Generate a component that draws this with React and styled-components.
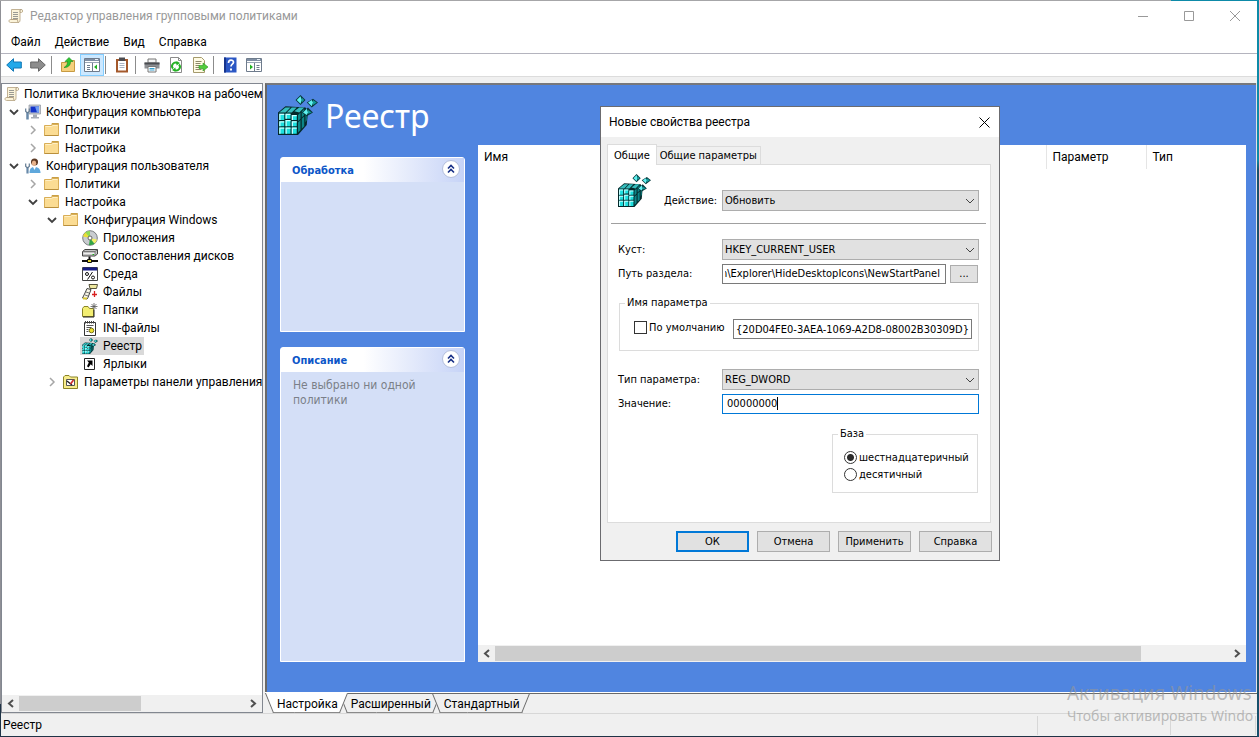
import React, { useEffect, useRef } from "react";
import styled, { createGlobalStyle, css } from "styled-components";

const ui = 'Roboto, "Noto Sans", sans-serif';
const display = '"Noto Sans", "Open Sans", sans-serif';
const dialogFont = '"DejaVu Sans Condensed", "DejaVu Sans", sans-serif';

const Global = createGlobalStyle`
  * { box-sizing: border-box; }
  body { margin: 0; font: 12px/18px ${ui}; color: #000; }
  button, input, select { font: inherit; color: inherit; margin: 0; }
  button { cursor: default; }
  svg { display: block; flex: none; }
`;

/* ---------- window frame ---------- */

const Desktop = styled.div`
  min-height: 100vh;
  display: flex;
  padding: 1px 2px 1px 1px;
  background: linear-gradient(90deg, #a6a6a8 93%, #0d8aa8 93%) top / 100% 1px no-repeat,
    linear-gradient(#0d8aa8 0 160px, #17506c 170px) right / 2px 100% no-repeat,
    linear-gradient(#8f9096 0 704px, #1f3346 704px) left / 1px 100% no-repeat,
    #1f3346;
`;

const Window = styled.div`
  position: relative;
  flex: 1;
  min-width: 0;
  display: flex;
  flex-direction: column;
  background: #f0f0f0;
  overflow: hidden;
`;

const TitleBar = styled.header`
  display: flex;
  align-items: center;
  height: 30px;
  padding-left: 7px;
  background: #fff;
  color: #999;
`;

const TitleText = styled.h1`
  flex: 1;
  margin: 0 0 0 6px;
  font: inherit;
`;

const CaptionButton = styled.button`
  width: 46px;
  height: 30px;
  padding: 0 0 0 2px;
  display: grid;
  place-items: center;
  border: 0;
  background: none;
`;

const MenuBar = styled.nav`
  display: flex;
  height: 23px;
  padding-left: 3px;
  background: #fff;
  border-bottom: 1px solid #b4b4be;
`;

const MenuButton = styled.button`
  padding: 0 7px;
  border: 0;
  background: none;
`;

const Toolbar = styled.div`
  display: flex;
  align-items: center;
  height: 23px;
  padding-left: 1px;
  background: #fff;
  border-bottom: 1px solid #dcdcdc;
`;

const ToolButton = styled.button`
  width: 24px;
  height: 22px;
  padding: 0;
  display: grid;
  place-items: center;
  border: 1px solid ${(p) => (p.$on ? "#84ceff" : "transparent")};
  background: ${(p) => (p.$on ? "#cce8ff" : "none")};
`;

const ToolSeparator = styled.span`
  width: 1px;
  height: 18px;
  margin: 0 4px 0 1px;
  background: #8c8c8c;
`;

const Body = styled.div`
  flex: 1;
  display: flex;
  gap: 2px;
  padding-top: 6px;
`;

const StatusBar = styled.footer`
  display: flex;
  height: 23px;
  padding-right: 1px;
  border-top: 1px solid #d7d7d7;
`;

const StatusCell = styled.div`
  flex: ${(p) => (p.$width ? `0 0 ${p.$width}px` : 1)};
  margin: 2px 0 1px;
  padding: 0 2px;
  border-right: 1px solid #d7d7d7;
`;

/* ---------- scroll bar ---------- */

const ScrollTrack = styled.div`
  display: flex;
  height: 17px;
  background: #f0f0f0;
`;

const ScrollButton = styled.button`
  width: 17px;
  padding: 0;
  display: grid;
  place-items: center;
  border: 0;
  background: none;
`;

const ScrollLane = styled.div`
  flex: 1;
  padding: 1px 0;
`;

const ScrollThumb = styled.div`
  width: ${(p) => p.$size};
  height: 100%;
  background: #cdcdcd;
`;

function HScroll({ size }) {
  return (
    <ScrollTrack>
      <ScrollButton aria-label="Прокрутить влево">
        <svg width="7" height="9" viewBox="0 0 7 9" fill="none" stroke="#505050" strokeWidth="2"><path d="M6 1 2 4.500 6 8" /></svg>
      </ScrollButton>
      <ScrollLane><ScrollThumb $size={size} /></ScrollLane>
      <ScrollButton aria-label="Прокрутить вправо">
        <svg width="7" height="9" viewBox="0 0 7 9" fill="none" stroke="#505050" strokeWidth="2"><path d="M1 1 5 4.500 1 8" /></svg>
      </ScrollButton>
    </ScrollTrack>
  );
}

/* ---------- tree ---------- */

const TreePane = styled.aside`
  flex: 0 0 262px;
  display: flex;
  flex-direction: column;
  border: 1px solid #828790;
  background: #fff;
  overflow: hidden;
`;

const TreeList = styled.ul`
  flex: 1;
  margin: 0;
  padding: 1px 0 0;
  list-style: none;
`;

const TreeRow = styled.li`
  display: flex;
  height: 18px;
  padding-left: ${(p) => (p.$level ? 3 + 19 * (p.$level - 1) : 2)}px;
`;

const Expander = styled.span`
  flex: 0 0 18px;
  display: grid;
  place-items: center;
`;

const TreeLabel = styled.button`
  display: flex;
  align-items: center;
  gap: ${(p) => (p.$root ? 4 : 5)}px;
  height: 18px;
  padding: 0 2px;
  border: 0;
  white-space: nowrap;
  background: ${(p) => (p.$selected ? "#d9d9d9" : "none")};
  ${(p) => p.$root && css`padding: 0;`}
`;

/* ---------- result pane ---------- */

const Main = styled.main`
  position: relative;
  flex: 1;
  min-width: 0;
  display: flex;
  flex-direction: column;
`;

const Pane = styled.section`
  flex: 1;
  display: flex;
  flex-direction: column;
  margin-right: 1px;
  padding: 0 10px 30px 11px;
  border: solid #696969;
  border-width: 2px 0 0 2px;
  border-top-color: #77787c;
  background: #5085e0;
  box-shadow: 0 1px #fff, 1px 0 #e3e3e3;
`;

const PaneHeader = styled.div`
  display: flex;
  gap: 7px;
  height: 60px;
  padding-top: 10px;
`;

const PaneTitle = styled.h2`
  margin: 0;
  font: 32px/42px ${display};
  color: #fff;
`;

const PaneBody = styled.div`
  flex: 1;
  display: flex;
  gap: 13px;
`;

const Cards = styled.div`
  flex: 0 0 187px;
  display: flex;
  flex-direction: column;
  gap: 15px;
  padding: 12px 0 0 2px;
`;

const Card = styled.section`
  flex: ${(p) => (p.$height ? `0 0 ${p.$height}px` : 1)};
  border: 1px solid #fff;
  border-radius: 3px 3px 0 0;
  background: #d4dff7;
`;

const CardHeader = styled.div`
  display: flex;
  align-items: center;
  justify-content: space-between;
  height: 24px;
  padding: 0 4px 2px 11px;
  background: linear-gradient(90deg, #fff 45%, #c6d3f7);
`;

const CardTitle = styled.h3`
  margin: 0;
  padding-top: 4px;
  font: bold 11px/18px "DejaVu Sans Condensed", sans-serif;
  color: #0c56c8;
`;

const RoundButton = styled.button`
  width: 18px;
  height: 18px;
  padding: 0;
  display: grid;
  place-items: center;
  border: 1px solid #b4bfdc;
  border-radius: 50%;
  background: #fff;
`;

const CardText = styled.p`
  margin: 0;
  padding: 6px 12px;
  font: 12px/15px ${dialogFont};
  color: #7b7f88;
`;

const ListView = styled.div`
  flex: 1;
  min-width: 0;
  display: flex;
  flex-direction: column;
  justify-content: space-between;
  background: #fff;
`;

const ListTable = styled.table`
  width: 100%;
  table-layout: fixed;
  border-collapse: collapse;
  th {
    height: 24px;
    padding: 0 6px;
    font-weight: normal;
    text-align: left;
    border-left: 1px solid #e5e5e5;
  }
  th:first-child { border-left: 0; }
  th + th { width: 100px; }
`;

const ViewTabs = styled.div`
  display: flex;
  height: 20px;
  margin-top: 1px;
  border-top: 1px solid #696969;
`;

const ViewTab = styled.button`
  position: relative;
  z-index: ${(p) => (p.$active ? 1 : 0)};
  height: 19px;
  margin: 0 -9px 0 0;
  padding: 0 10px 0 12px;
  border: 0;
  background: none;
  span { position: relative; z-index: 1; }
  &::before, &::after {
    content: "";
    position: absolute;
    top: ${(p) => (p.$active ? "-1px" : "0")};
    bottom: 0;
    background: ${(p) => (p.$active ? "#fff" : "#f0f0f0")};
    border-bottom: 1px solid #8a8a8a;
  }
  &::before {
    left: 4px;
    right: 50%;
    border-left: 1px solid #696969;
    transform: skewX(22deg);
  }
  &::after {
    left: 40%;
    right: 4px;
    border-right: 1px solid #696969;
    transform: skewX(-22deg);
  }
`;

const Watermark = styled.div`
  position: absolute;
  right: 0;
  bottom: 9px;
  width: 190px;
  white-space: nowrap;
  pointer-events: none;
  color: rgba(150, 150, 150, 0.62);
  font-family: ${display};
`;

const WatermarkTitle = styled.div`
  font-size: 19px;
  line-height: 24px;
`;

const WatermarkText = styled.div`
  font-size: 14px;
  line-height: 22px;
`;

/* ---------- dialog ---------- */

const Dialog = styled.div`
  position: absolute;
  z-index: 2;
  left: 335px;
  top: 23px;
  width: 400px;
  border: 1px solid #6b6b6f;
  background: #f0f0f0;
  font: 11px/18px ${dialogFont};
`;

const DialogTitle = styled.div`
  display: flex;
  align-items: center;
  justify-content: space-between;
  height: 30px;
  padding: 0 8px;
  background: #fff;
  font: 12px/18px ${ui};
`;

const CloseButton = styled.button`
  width: 14px;
  height: 14px;
  padding: 0;
  display: grid;
  place-items: center;
  border: 0;
  background: none;
`;

const TabList = styled.div`
  display: flex;
  align-items: flex-end;
  height: 27px;
  padding: 0 6px;
`;

const DialogTab = styled.button`
  height: ${(p) => (p.$active ? 21 : 18)}px;
  padding: 0 ${(p) => (p.$active ? 6 : 3)}px;
  line-height: 17px;
  border: 1px solid #dcdcdc;
  border-bottom: 0;
  border-left-width: ${(p) => (p.$active ? 1 : 0)}px;
  background: ${(p) => (p.$active ? "#fff" : "#f0f0f0")};
  ${(p) => p.$active && css`position: relative; margin-bottom: -1px;`}
`;

const TabPanel = styled.div`
  height: 359px;
  margin: 0 8px 0 6px;
  padding: 9px 11px 0 10px;
  border: 1px solid #dcdcdc;
  background: #fff;
`;

const FormRow = styled.div`
  display: flex;
  align-items: ${(p) => p.$align || "center"};
  height: ${(p) => p.$height || 21}px;
  margin-top: ${(p) => p.$top || 0}px;
`;

const IconCell = styled.span`
  flex: 0 0 46px;
  align-self: flex-start;
`;

const FieldLabel = styled.label`
  flex: 0 0 ${(p) => p.$width || 104}px;
  line-height: 20px;
`;

const SelectBox = styled.span`
  position: relative;
  flex: 1;
  svg { position: absolute; right: 4px; top: 8px; pointer-events: none; }
`;

const Select = styled.select`
  display: block;
  width: 100%;
  height: 21px;
  padding: 0 2px;
  appearance: none;
  border: 1px solid #adadad;
  border-radius: 0;
  background: #e1e1e1;
`;

const TextInput = styled.input`
  flex: 1;
  min-width: 0;
  height: 20px;
  padding: 0 5px 0 2px;
  border: 1px solid #7a7a7a;
  background: #fff;
`;

const NameInput = styled(TextInput)`
  flex: 0 0 239px;
  margin-left: auto;
  padding-right: 2px;
`;

const FocusedField = styled.div`
  flex: 1;
  display: flex;
  align-items: center;
  height: 20px;
  padding-left: 4px;
  border: 1px solid #0078d7;
  input {
    field-sizing: content;
    padding: 0;
    border: 0;
    outline: 0;
    background: none;
  }
`;

const Caret = styled.span`
  width: 1px;
  height: 13px;
  background: #000;
`;

const Divider = styled.hr`
  height: 1px;
  margin: 12px -7px 15px;
  border: 0;
  background: #a0a0a0;
`;

const Group = styled.fieldset`
  min-width: 0;
  margin: ${(p) => (p.$right ? "11px 1px 0 214px" : "10px 0 0 1px")};
  height: ${(p) => (p.$right ? 68 : 57)}px;
  padding: ${(p) => (p.$right ? "6px 11px" : "7px 6px 0 14px")};
  border: 1px solid #dcdcdc;
  legend {
    margin-left: ${(p) => (p.$right ? -6 : -9)}px;
    padding: 0 2px;
  }
`;

const Check = styled.input`
  appearance: none;
  flex: none;
  width: 13px;
  height: 13px;
  border: 1px solid #333;
  background: #fff;
`;

const Radio = styled(Check)`
  border-radius: 50%;
  &:checked { background: radial-gradient(#2b2b2b 0 3px, #fff 4px); }
`;

const OptionLabel = styled.label`
  display: flex;
  align-items: center;
  gap: 2px;
  height: 17px;
  white-space: nowrap;
`;

const Buttons = styled.div`
  display: flex;
  justify-content: flex-end;
  gap: 8px;
  padding: 8px 7px;
`;

const PushButton = styled.button`
  width: 73px;
  height: 21px;
  padding: 0;
  line-height: 17px;
  border: ${(p) => (p.$primary ? "2px solid #0078d7" : "1px solid #adadad")};
  background: #e1e1e1;
`;

const BrowseButton = styled(PushButton)`
  width: 28px;
  height: 18px;
  margin: 0 1px 0 4px;
  line-height: 12px;
`;

/* ---------- icons ---------- */

const Ico = ({ children, size = 16 }) => (
  <svg width={size} height={size} viewBox="0 0 16 16" fill="none" aria-hidden="true">{children}</svg>
);

const ScrollIcon = () => (
  <Ico>
    <path d="M3.500 1.500h10c1.500 0 1.500 3 0 3h-1.500V12c0 2-1 2.500-2 2.500H2.500c-2 0-2-3 0-3h1Z" fill="#fbf3d9" stroke="#c2b294" />
    <path d="M12 4.500V3c0-1 .6-1.500 1.500-1.500" stroke="#a4947a" />
    <path d="M5 4.500h5M5 6.500h5M5 8.500h5M5 10.500h5" stroke="#9a9a94" />
    <path d="M2.500 11.500h7c0 2 .5 3 1.500 3" stroke="#b5a384" />
  </Ico>
);

const ArrowIcon = ({ fill, stroke, flip }) => (
  <Ico>
    <path transform={flip ? "matrix(-1 0 0 1 16 0)" : undefined} d="M.7 8 7.500 1.700V5H15.300v6H7.500v3.300Z" fill={fill} stroke={stroke} />
  </Ico>
);

const FolderIcon = () => (
  <Ico>
    <path d="M8 1.500h6.500v4H8Z" fill="#f3cf7a" stroke="#c99f45" />
    <path d="M10 2.500h3.500" stroke="#4c9bd8" />
    <path d="M.5 3.500h7l1.500-1h5.500v11H.5Z" fill="#fbdc93" stroke="#d9ae57" />
    <path d="M1.500 4.500h6l1.500-1h4.500" stroke="#fff0c4" />
    <path d="M.5 13.500h14" stroke="#b98f3c" />
  </Ico>
);

const FolderUpIcon = () => (
  <Ico>
    <path d="M1.500 5.500h5l1.500-2h6.500v11h-13Z" fill="#f5cf7c" stroke="#c79a42" />
    <path d="M4 10.500C7 9 7.500 6.500 7.500 4.500H5L9 .5l4 4h-2.500c0 4-2.500 6-6.500 6Z" fill="#2fc52f" stroke="#138a1b" strokeWidth=".6" />
  </Ico>
);

const PanelIcon = ({ right }) => (
  <Ico>
    <path d="M.5 1.500h15v13H.5Z" fill="#fff" stroke="#6e7b8c" />
    <path d="M1 3h14" stroke="#7f8ea3" strokeWidth="2" />
    <path d="M11 2.500h3" stroke="#e8eef5" />
    <path d="M1 5.500h14" stroke="#9aa6b5" />
    <path d="M8.500 6v8" stroke="#6e7b8c" />
    <path d={right ? "M10.500 8.500h3M10.500 10.500h3M10.500 12.500h3" : "M3 8.500h3M3 10.500h3M3 12.500h3"} stroke="#6e7b8c" />
    <path d={right ? "M4 7.500v5l3-2.500Z" : "M13 7.500v5l-3-2.500Z"} fill="#21b321" />
  </Ico>
);

const ClipboardIcon = () => (
  <Ico>
    <path d="M2 2h12v13.500H2Z" fill="#a4592c" />
    <path d="M4 4h8v9.500H4Z" fill="#fff" />
    <path d="M5 .5h6V4H5Z" fill="#4b4b50" />
    <path d="M5.500 6.500h5M5.500 8.500h5M5.500 10.500h5" stroke="#aab4c4" />
  </Ico>
);

const PrinterIcon = () => (
  <Ico>
    <path d="M4 2h8v4H4Z" fill="#f4f4f4" stroke="#777" />
    <path d="M.5 5.500h15v6H.5Z" fill="#8d8f93" />
    <path d="M.5 5.500h15v2H.5Z" fill="#4a4c50" />
    <path d="M4 9.500h8V15H4Z" fill="#fff" stroke="#777" />
    <path d="M5.500 11.500h5M5.500 13h5" stroke="#38a0cf" />
  </Ico>
);

const RefreshDocIcon = () => (
  <Ico>
    <path d="M2.500.5h8l3 3v12h-11Z" fill="#fff" stroke="#8b8b8b" />
    <path d="M10.500.5v3h3" stroke="#8b8b8b" />
    <path d="M9.500 6.200A3.500 3.500 0 0 0 5 11.500M6.500 12.800A3.500 3.500 0 0 0 11 7.500" stroke="#25b125" strokeWidth="1.900" />
    <path d="M8.500 4v4.500L12 6ZM7.500 15v-4.500L4 13Z" fill="#25b125" />
  </Ico>
);

const ExportIcon = () => (
  <Ico>
    <path d="M1.500.5h8l3 3v12h-11Z" fill="#fffbe4" stroke="#a59a6c" />
    <path d="M3.500 4.500h6M3.500 6.500h5M3.500 8.500h4M3.500 10.500h4M3.500 12.500h6" stroke="#8d8867" />
    <path d="M7 8.500h4V6l5 4-5 4v-2.500H7Z" fill="#53cc3c" stroke="#269620" strokeWidth=".6" />
  </Ico>
);

const HelpIcon = () => (
  <Ico>
    <path d="M2 .5h12.500v15H2Z" fill="#2b57c4" />
    <path d="M2 .5h2v15H2Z" fill="#17348c" />
    <path d="M6.500 6c0-4 5-3.500 5-.8 0 2-2.500 2-2.500 4.300" stroke="#fff" strokeWidth="1.700" />
    <path d="M8 11.500h2v2H8Z" fill="#fff" />
  </Ico>
);

const ComputerIcon = () => (
  <Ico>
    <path d="M4 1h11.500v9H4Z" fill="#c8ccd4" stroke="#8e949e" strokeWidth=".7" />
    <path d="M5.500 2.500h8.500v6H5.500Z" fill="#1434c8" />
    <path d="M10 2.500h4v6h-2Z" fill="#6f9cf2" />
    <path d="M8 10.500h4v2.500h2V14.500H6V13h2Z" fill="#a6abb5" />
    <path d="M2.500 8v7.500" stroke="#6889a9" strokeWidth="2.500" />
    <path d="M.7 4.500v3l1.800 1.200 1.800-1.200v-3" stroke="#637b92" strokeWidth="1.200" />
  </Ico>
);

const UserIcon = () => (
  <Ico>
    <circle cx="9.500" cy="4" r="3.500" fill="#5c3a24" />
    <ellipse cx="9" cy="5.200" rx="2.200" ry="2.600" fill="#e9b48c" />
    <path d="M4.500 15c0-4.500 2-6 5-6s6 1.500 6 6Z" fill="#5fa8dc" />
    <path d="m8 9 1.500 3L11 9Z" fill="#fff" />
    <path d="M2.500 9v6.500" stroke="#6889a9" strokeWidth="2.200" />
    <path d="M.7 5.500v3l1.800 1.200 1.800-1.200v-3" stroke="#637b92" strokeWidth="1.200" />
  </Ico>
);

const DiscIcon = () => (
  <Ico>
    <circle cx="8" cy="8" r="7.300" fill="#c9ccd0" stroke="#7a7d80" />
    <path d="M8 8 3 2.500A7 7 0 0 1 8 1Z" fill="#8edb56" />
    <path d="m8 8-7-1.500A7 7 0 0 1 3.500 2.500Z" fill="#e9df35" />
    <path d="m8 8 4.500 5.500A7 7 0 0 1 7 15Z" fill="#32a545" />
    <path d="m8 8 7 1.500a7 7 0 0 1-2.500 4Z" fill="#f3f06a" />
    <circle cx="8" cy="8" r="2" fill="#fff" stroke="#666" />
  </Ico>
);

const DriveIcon = () => (
  <Ico>
    <path d="m3 1.500-2.500 2v4.500h12.500L15.500 6V1.500Z" fill="#c4c4c4" stroke="#444" />
    <path d="M1 3.500h12L15 2v0M13 3.500V8" stroke="#777" />
    <path d="M1.500 5.500h11" stroke="#eee" />
    <path d="M10.500 6.500H12" stroke="#16b416" />
    <path d="M7.500 8.500v3M0 13h16" stroke="#111" strokeWidth="2" />
    <path d="M5.500 11.500h4v3h-4Z" fill="#e6d92c" stroke="#111" />
  </Ico>
);

const EnvironmentIcon = () => (
  <Ico>
    <path d="M.5 1.500h15v13H.5Z" fill="#fff" stroke="#444" />
    <path d="M1 3h14" stroke="#151b83" strokeWidth="3" />
    <path d="m10.500 6-5 7.500" stroke="#111" />
    <circle cx="5" cy="8" r="1.500" stroke="#111" />
    <circle cx="11" cy="11.500" r="1.500" stroke="#111" />
  </Ico>
);

const FilesIcon = () => (
  <Ico>
    <path d="M7 .5h8.500l-1 4H8Z" fill="#efe9a0" stroke="#55523a" />
    <path d="m5 4.500 4 1-3 8-1 1.500-4.500-1 2-4Z" fill="#f7f5e6" stroke="#444" />
    <path d="m4 8 3 1M3 11l3 1" stroke="#777" />
    <path d="M1 14.500h4" stroke="#d8c632" strokeWidth="2" />
    <path d="M12.500 7v6M10 10.500h5" stroke="#d81f1f" strokeWidth="1.300" />
  </Ico>
);

const NewFolderIcon = () => (
  <Ico>
    <path d="M.5 14.500v-8l1.500-2h4l1.500 2h4v8Z" fill="#f3ee72" stroke="#8b8426" />
    <path d="M1 15h11V8" stroke="#222" />
    <path d="M12 1v7M8.500 4.500h7M9.500 2l5 5M14.500 2l-5 5" stroke="#555" strokeWidth=".8" />
  </Ico>
);

const IniIcon = () => (
  <Ico>
    <path d="M2.500 2.500h11v13h-11Z" fill="#fff" stroke="#333" />
    <path d="M3.500 1v2.500M5.500 1v2.500M7.500 1v2.500M9.500 1v2.500M11.500 1v2.500" stroke="#444" />
    <path d="M4.500 5.500h7M4.500 7.500h5M4.500 9.500h2M4.500 11.500h2" stroke="#555" />
    <circle cx="9.500" cy="10.500" r="2.300" fill="#eee02c" stroke="#7a7316" />
  </Ico>
);

const ShortcutIcon = () => (
  <Ico>
    <path d="M2.500 2.500h10v11h-10Z" fill="#fff" stroke="#222" />
    <path d="M5 4.500h5.500V10L8.700 8.200 6.500 11.500 5 10.200l1.800-3.800Z" fill="#000" />
  </Ico>
);

const ControlPanelIcon = () => (
  <Ico>
    <path d="M.5 14.500V3l1.500-1.500h4L7.500 3h7v11.500Z" fill="#f7ec8c" stroke="#8b8426" />
    <path d="M3.500 5.500h8v6h-8Z" fill="#fff" stroke="#555" />
    <path d="m4 7 5 4" stroke="#222" strokeWidth="1.500" />
    <path d="m10.500 6-3 4" stroke="#d12c2c" strokeWidth="1.700" />
  </Ico>
);

const RegistryIcon = ({ size = 32 }) => (
  <svg width={size} height={size} viewBox="0 0 32 32" aria-hidden="true">
    <path d="m0 14 6-5 16 1 2 3-1 11-7 8H0Z" fill="#04282a" />
    <path d="m1 14 5-4h4l-4 4Zm6 0 4-4h4l-4 4Zm6-1 4-3h4l-4 4Z" fill="#35bcbc" />
    <path d="M1 15h4v5H1Zm5 0h4v4H6Zm5 1h4v4h-4ZM1 21h4v4H1Zm5-1h4v5H6Zm5 1h4v4h-4ZM1 26h4v5H1Zm5 0h4v5H6Zm5 0h4v5h-4Z" fill="#1de0df" />
    <path d="M1 15h4v1H2v4H1Zm5 0h4v1H7v3H6Zm5 1h4v1h-3v3h-1ZM1 21h4v1H2v3H1Zm5-1h4v1H7v4H6Zm5 1h4v1h-3v3h-1ZM1 26h4v1H2v4H1Zm5 0h4v1H7v4H6Zm5 0h4v1h-3v4h-1Z" fill="#c8ffff" />
    <path d="m16 16 2-2v5l-2 2Zm3-3 2-2v5l-2 2Zm-3 9 2-2v5l-2 2Zm3-3 2-2v5l-2 2Zm3-3 1-1v5l-1 2Zm-6 11 2-2v3l-2 2Zm3-3 2-2v3l-2 2Z" fill="#0c8587" />
    <path d="m18 0 4 4-4 4-4-4Zm10 3 4 3-5 4-4-4Zm-4 7 4 4-5 3-4-3Z" fill="#083a3d" />
    <path d="m18 1 1 3-1 3-3-3Zm9 3 1 2-1 3-3-3Zm-4 7 1 3-1 2-3-2Z" fill="#5ff0ef" />
    <path d="m19 2 2 2-2 2Zm9 2 3 2-3 2Zm-4 8 3 2-3 1Z" fill="#109b9c" />
  </svg>
);

const Chevron = ({ open }) => (
  <svg width="10" height="10" viewBox="0 0 10 10" fill="none" stroke={open ? "#404040" : "#a6a6a6"} strokeWidth={open ? 1.800 : 1.500}>
    <path d={open ? "m1 3 4 4 4-4" : "m3 1 4 4-4 4"} />
  </svg>
);

const SelectChevron = () => (
  <svg width="10" height="6" viewBox="0 0 10 6" fill="none" stroke="#444"><path d="m1 1 4 4 4-4" /></svg>
);

const DoubleUp = () => (
  <svg width="8" height="10" viewBox="0 0 8 10" fill="none" stroke="#172f86" strokeWidth="1.600"><path d="m1 4.500 3-3 3 3M1 8.500l3-3 3 3" /></svg>
);

/* ---------- data ---------- */

const tree = [
  { level: 0, icon: <ScrollIcon />, text: "Политика Включение значков на рабочем" },
  { level: 1, open: true, icon: <ComputerIcon />, text: "Конфигурация компьютера" },
  { level: 2, open: false, icon: <FolderIcon />, text: "Политики" },
  { level: 2, open: false, icon: <FolderIcon />, text: "Настройка" },
  { level: 1, open: true, icon: <UserIcon />, text: "Конфигурация пользователя" },
  { level: 2, open: false, icon: <FolderIcon />, text: "Политики" },
  { level: 2, open: true, icon: <FolderIcon />, text: "Настройка" },
  { level: 3, open: true, icon: <FolderIcon />, text: "Конфигурация Windows" },
  { level: 4, icon: <DiscIcon />, text: "Приложения" },
  { level: 4, icon: <DriveIcon />, text: "Сопоставления дисков" },
  { level: 4, icon: <EnvironmentIcon />, text: "Среда" },
  { level: 4, icon: <FilesIcon />, text: "Файлы" },
  { level: 4, icon: <NewFolderIcon />, text: "Папки" },
  { level: 4, icon: <IniIcon />, text: "INI-файлы" },
  { level: 4, icon: <RegistryIcon size={16} />, text: "Реестр", selected: true },
  { level: 4, icon: <ShortcutIcon />, text: "Ярлыки" },
  { level: 3, open: false, icon: <ControlPanelIcon />, text: "Параметры панели управления" },
];

const tools = [
  ["Назад", <ArrowIcon fill="#22a9ea" stroke="#1277b5" />],
  ["Вперёд", <ArrowIcon fill="#8d8d8d" stroke="#666" flip />],
  null,
  ["На один уровень вверх", <FolderUpIcon />],
  ["Дерево консоли", <PanelIcon />, true],
  null,
  ["Вставить", <ClipboardIcon />],
  null,
  ["Печать", <PrinterIcon />],
  ["Обновить", <RefreshDocIcon />],
  ["Экспорт списка", <ExportIcon />],
  null,
  ["Справка", <HelpIcon />],
  ["Область действий", <PanelIcon right />],
];

function Dropdown({ id, value }) {
  return (
    <SelectBox>
      <Select id={id} defaultValue={value}><option>{value}</option></Select>
      <SelectChevron />
    </SelectBox>
  );
}

function RegistryDialog() {
  const path = useRef(null);
  useEffect(() => {
    path.current.scrollLeft = path.current.scrollWidth;
  }, []);
  return (
    <Dialog role="dialog" aria-labelledby="dialog-title">
      <DialogTitle>
        <span id="dialog-title">Новые свойства реестра</span>
        <CloseButton aria-label="Закрыть">
          <svg width="11" height="11" viewBox="0 0 11 11" stroke="#000"><path d="m.5.5 10 10M10.500.5l-10 10" /></svg>
        </CloseButton>
      </DialogTitle>
      <TabList role="tablist">
        <DialogTab role="tab" aria-selected="true" $active>Общие</DialogTab>
        <DialogTab role="tab" aria-selected="false">Общие параметры</DialogTab>
      </TabList>
      <TabPanel>
        <FormRow $height={37} $align="flex-end">
          <IconCell><RegistryIcon size={33} /></IconCell>
          <FieldLabel htmlFor="action" $width={58}>Действие:</FieldLabel>
          <Dropdown id="action" value="Обновить" />
        </FormRow>
        <Divider />
        <FormRow>
          <FieldLabel htmlFor="hive">Куст:</FieldLabel>
          <Dropdown id="hive" value="HKEY_CURRENT_USER" />
        </FormRow>
        <FormRow $top={3}>
          <FieldLabel htmlFor="path">Путь раздела:</FieldLabel>
          <TextInput id="path" ref={path} defaultValue="Software\Microsoft\Windows\CurrentVersion\Explorer\HideDesktopIcons\NewStartPanel" />
          <BrowseButton aria-label="Обзор">...</BrowseButton>
        </FormRow>
        <Group>
          <legend>Имя параметра</legend>
          <FormRow $align="flex-start">
            <OptionLabel><Check type="checkbox" />По умолчанию</OptionLabel>
            <NameInput aria-label="Имя параметра" defaultValue="{20D04FE0-3AEA-1069-A2D8-08002B30309D}" />
          </FormRow>
        </Group>
        <FormRow $top={18}>
          <FieldLabel htmlFor="type">Тип параметра:</FieldLabel>
          <Dropdown id="type" value="REG_DWORD" />
        </FormRow>
        <FormRow $top={3}>
          <FieldLabel htmlFor="value">Значение:</FieldLabel>
          <FocusedField>
            <input id="value" defaultValue="00000000" />
            <Caret />
          </FocusedField>
        </FormRow>
        <Group $right>
          <legend>База</legend>
          <OptionLabel><Radio type="radio" name="base" defaultChecked />шестнадцатеричный</OptionLabel>
          <OptionLabel><Radio type="radio" name="base" />десятичный</OptionLabel>
        </Group>
      </TabPanel>
      <Buttons>
        <PushButton $primary>ОК</PushButton>
        <PushButton>Отмена</PushButton>
        <PushButton>Применить</PushButton>
        <PushButton>Справка</PushButton>
      </Buttons>
    </Dialog>
  );
}

export default function App() {
  return (
    <Desktop>
      <Global />
      <Window>
        <TitleBar>
          <ScrollIcon />
          <TitleText>Редактор управления групповыми политиками</TitleText>
          <CaptionButton aria-label="Свернуть"><svg width="10" height="10" stroke="#999"><path d="M0 5.500h10" /></svg></CaptionButton>
          <CaptionButton aria-label="Развернуть"><svg width="10" height="10" stroke="#999" fill="none"><path d="M.5.5h9v9h-9Z" /></svg></CaptionButton>
          <CaptionButton aria-label="Закрыть окно"><svg width="10" height="10" stroke="#999"><path d="m0 0 10 10M10 0 0 10" /></svg></CaptionButton>
        </TitleBar>
        <MenuBar>
          {["Файл", "Действие", "Вид", "Справка"].map((m) => <MenuButton key={m}>{m}</MenuButton>)}
        </MenuBar>
        <Toolbar>
          {tools.map((t, i) =>
            t ? <ToolButton key={i} aria-label={t[0]} $on={t[2]}>{t[1]}</ToolButton> : <ToolSeparator key={i} />
          )}
        </Toolbar>
        <Body>
          <TreePane>
            <TreeList>
              {tree.map((n, i) => (
                <TreeRow key={i} $level={n.level}>
                  {n.level > 0 && <Expander>{n.open !== undefined && <Chevron open={n.open} />}</Expander>}
                  <TreeLabel $selected={n.selected} $root={n.level === 0}>{n.icon}{n.text}</TreeLabel>
                </TreeRow>
              ))}
            </TreeList>
            <HScroll size="54%" />
          </TreePane>
          <Main>
            <Pane>
              <PaneHeader>
                <RegistryIcon size={40} />
                <PaneTitle>Реестр</PaneTitle>
              </PaneHeader>
              <PaneBody>
                <Cards>
                  <Card $height={175}>
                    <CardHeader>
                      <CardTitle>Обработка</CardTitle>
                      <RoundButton aria-label="Свернуть раздел «Обработка»"><DoubleUp /></RoundButton>
                    </CardHeader>
                  </Card>
                  <Card>
                    <CardHeader>
                      <CardTitle>Описание</CardTitle>
                      <RoundButton aria-label="Свернуть раздел «Описание»"><DoubleUp /></RoundButton>
                    </CardHeader>
                    <CardText>Не выбрано ни одной политики</CardText>
                  </Card>
                </Cards>
                <ListView>
                  <ListTable>
                    <thead><tr><th>Имя</th><th>Параметр</th><th>Тип</th></tr></thead>
                  </ListTable>
                  <HScroll size="88%" />
                </ListView>
              </PaneBody>
            </Pane>
            <ViewTabs role="tablist">
              <ViewTab role="tab" $active><span>Настройка</span></ViewTab>
              <ViewTab role="tab"><span>Расширенный</span></ViewTab>
              <ViewTab role="tab"><span>Стандартный</span></ViewTab>
            </ViewTabs>
            <RegistryDialog />
          </Main>
        </Body>
        <StatusBar>
          <StatusCell>Реестр</StatusCell>
          <StatusCell $width={133} />
          <StatusCell $width={85} />
        </StatusBar>
        <Watermark>
          <WatermarkTitle>Активация Windows</WatermarkTitle>
          <WatermarkText>Чтобы активировать Windo</WatermarkText>
        </Watermark>
      </Window>
    </Desktop>
  );
}
